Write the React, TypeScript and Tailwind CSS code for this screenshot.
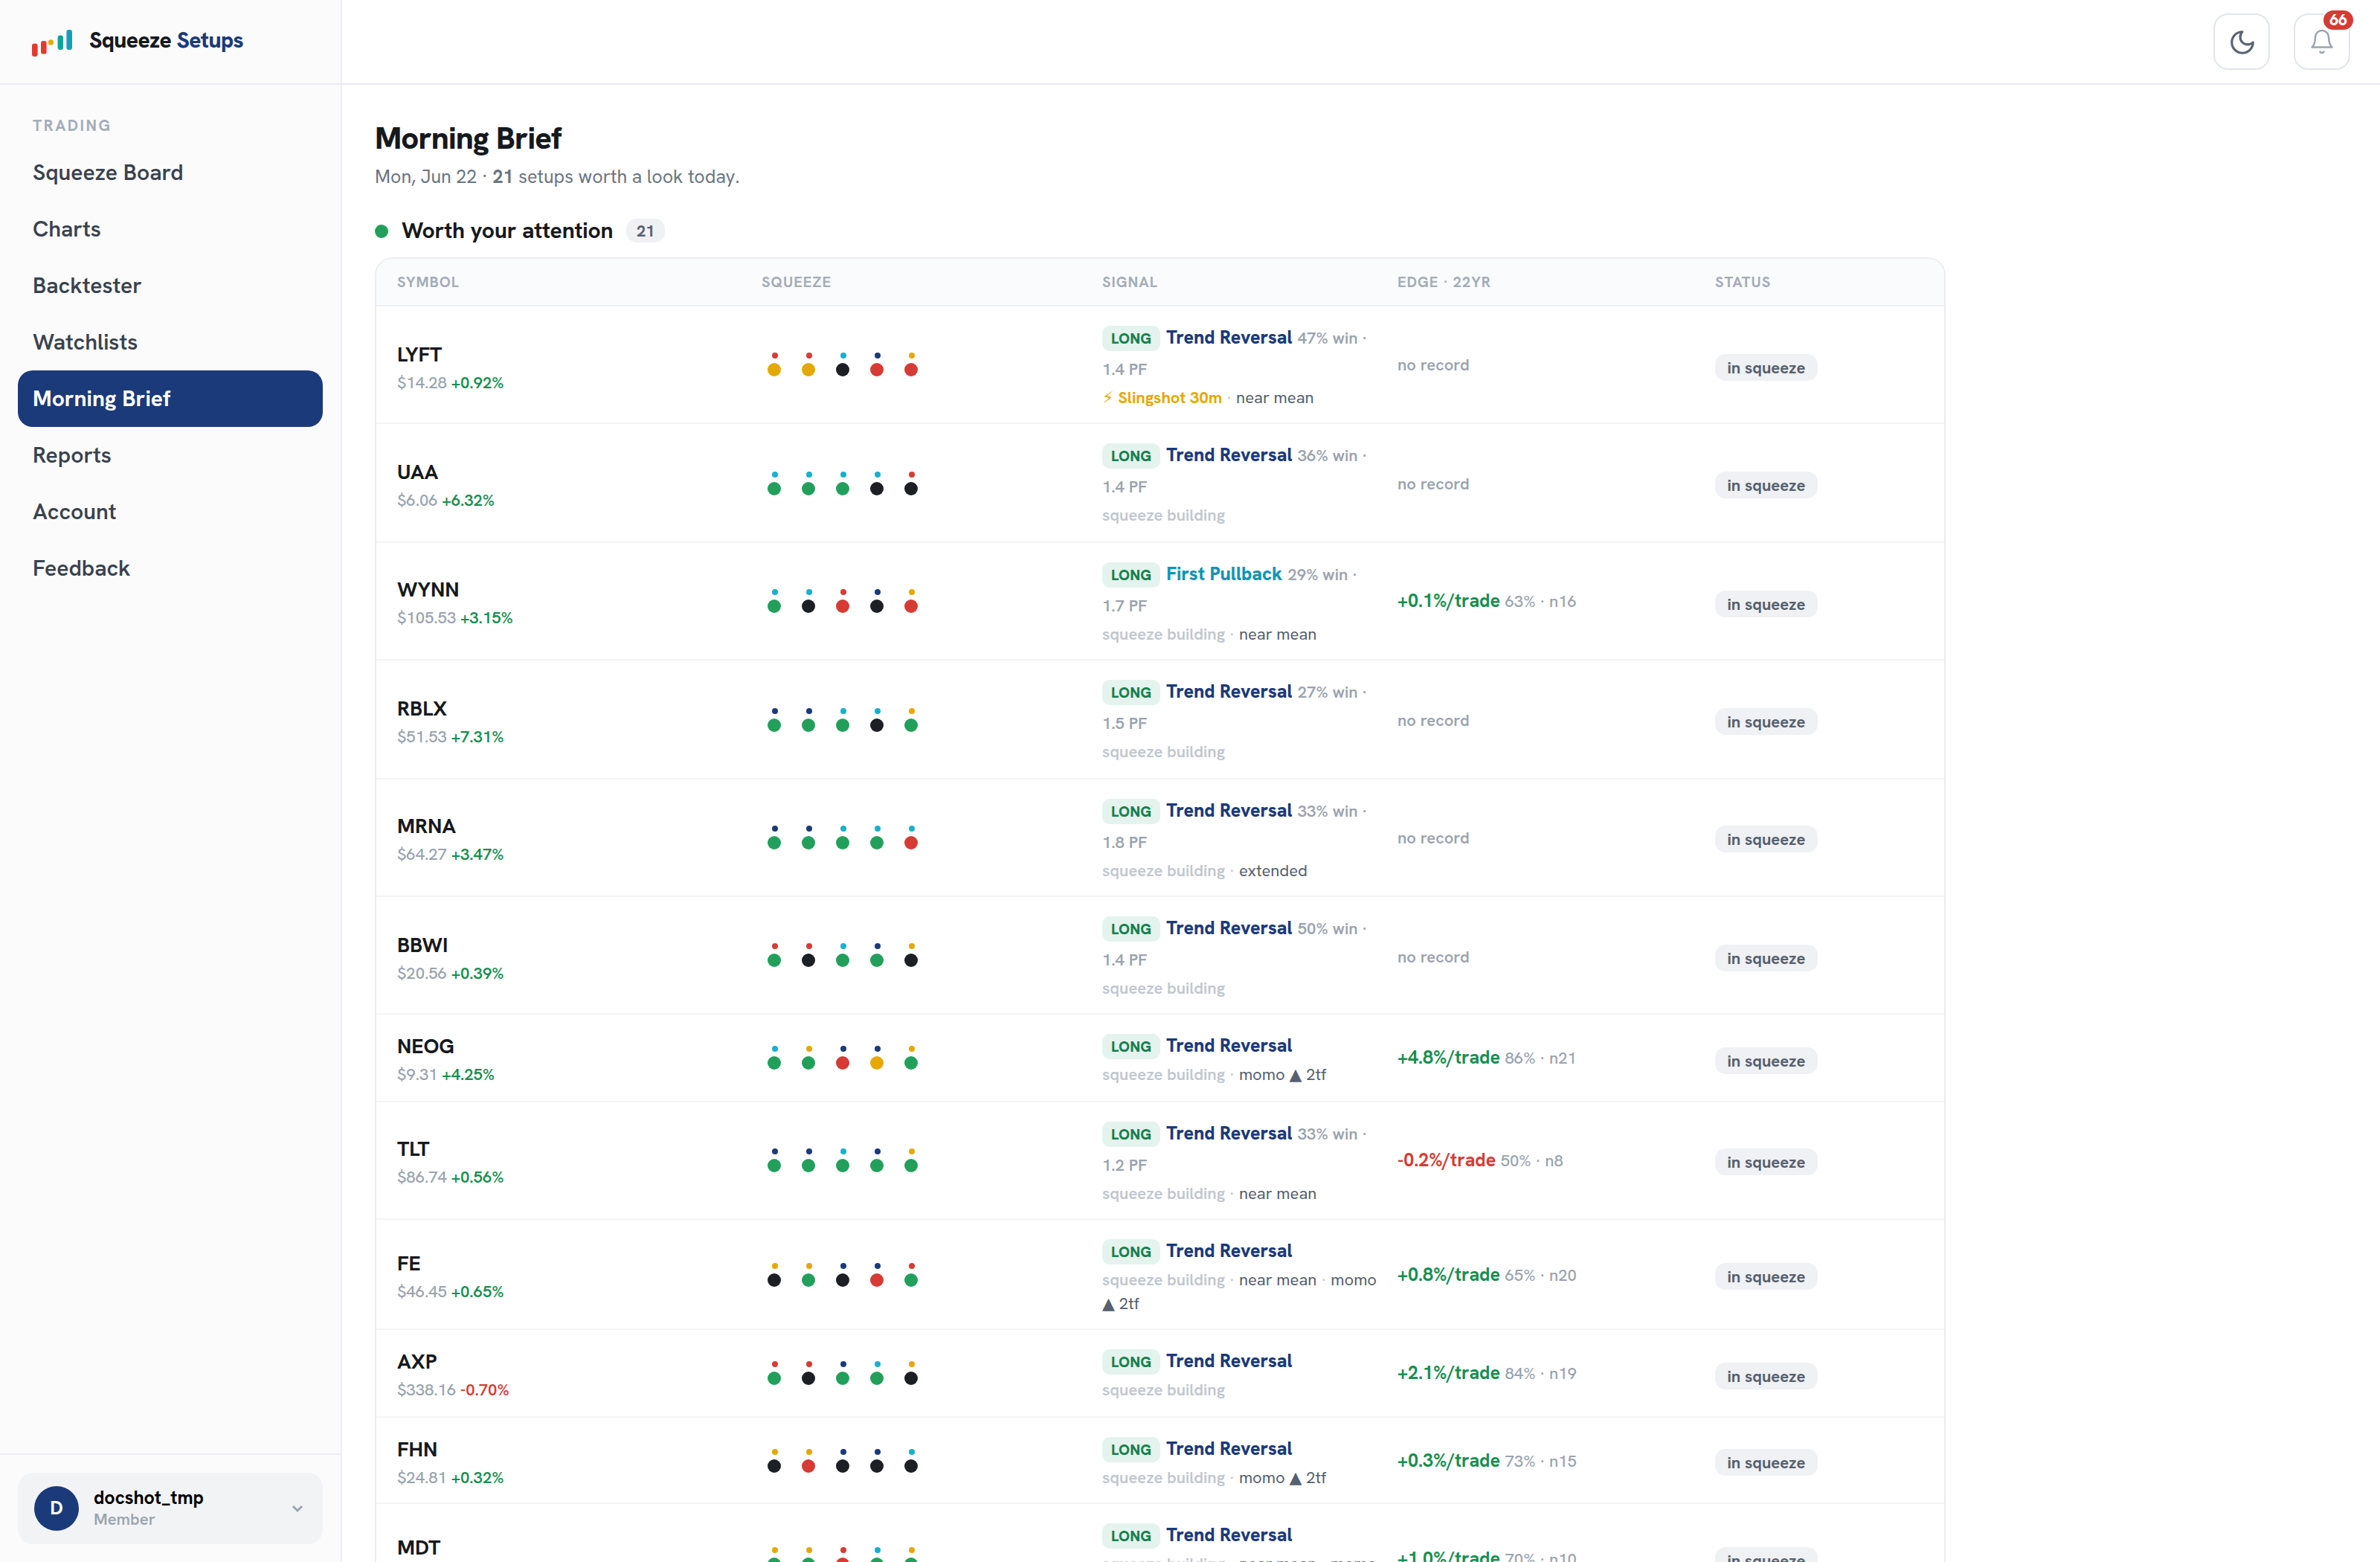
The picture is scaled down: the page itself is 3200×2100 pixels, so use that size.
import type { ReactNode } from 'react';

const NAV_ITEMS = ['Squeeze Board', 'Charts', 'Backtester', 'Watchlists', 'Morning Brief', 'Reports', 'Account', 'Feedback'];

const DOT: Record<string, string> = {
  r: 'bg-[#d63b34]',
  y: 'bg-[#e5a800]',
  g: 'bg-[#22a05b]',
  k: 'bg-[#1c1f24]',
  c: 'bg-[#18b0cf]',
  n: 'bg-[#1b3a7a]',
};

type Row = {
  symbol: string;
  price: string;
  change: string;
  momentum: string;
  squeeze: string;
  name: string;
  record?: string;
  slingshot?: boolean;
  notes?: string[];
  edge?: string;
  sample?: string;
};

const ROWS: Row[] = [
  { symbol: 'LYFT', price: '$14.28', change: '+0.92%', momentum: 'rrcny', squeeze: 'yykrr', name: 'Trend Reversal', record: '47% win · 1.4 PF', slingshot: true, notes: ['near mean'] },
  { symbol: 'UAA', price: '$6.06', change: '+6.32%', momentum: 'ccccr', squeeze: 'gggkk', name: 'Trend Reversal', record: '36% win · 1.4 PF' },
  { symbol: 'WYNN', price: '$105.53', change: '+3.15%', momentum: 'ccrny', squeeze: 'gkrkr', name: 'First Pullback', record: '29% win · 1.7 PF', notes: ['near mean'], edge: '+0.1%/trade', sample: '63% · n16' },
  { symbol: 'RBLX', price: '$51.53', change: '+7.31%', momentum: 'nnccy', squeeze: 'gggkg', name: 'Trend Reversal', record: '27% win · 1.5 PF' },
  { symbol: 'MRNA', price: '$64.27', change: '+3.47%', momentum: 'nnccc', squeeze: 'ggggr', name: 'Trend Reversal', record: '33% win · 1.8 PF', notes: ['extended'] },
  { symbol: 'BBWI', price: '$20.56', change: '+0.39%', momentum: 'rrcny', squeeze: 'gkggk', name: 'Trend Reversal', record: '50% win · 1.4 PF' },
  { symbol: 'NEOG', price: '$9.31', change: '+4.25%', momentum: 'cynny', squeeze: 'ggryg', name: 'Trend Reversal', notes: ['momo ▲ 2tf'], edge: '+4.8%/trade', sample: '86% · n21' },
  { symbol: 'TLT', price: '$86.74', change: '+0.56%', momentum: 'nncny', squeeze: 'ggggg', name: 'Trend Reversal', record: '33% win · 1.2 PF', notes: ['near mean'], edge: '-0.2%/trade', sample: '50% · n8' },
  { symbol: 'FE', price: '$46.45', change: '+0.65%', momentum: 'yynnr', squeeze: 'kgkrg', name: 'Trend Reversal', notes: ['near mean', 'momo ▲ 2tf'], edge: '+0.8%/trade', sample: '65% · n20' },
  { symbol: 'AXP', price: '$338.16', change: '-0.70%', momentum: 'rrncy', squeeze: 'gkggk', name: 'Trend Reversal', edge: '+2.1%/trade', sample: '84% · n19' },
  { symbol: 'FHN', price: '$24.81', change: '+0.32%', momentum: 'yynnc', squeeze: 'krkkk', name: 'Trend Reversal', notes: ['momo ▲ 2tf'], edge: '+0.3%/trade', sample: '73% · n15' },
  { symbol: 'MDT', price: '$84.12', change: '+0.41%', momentum: 'yyrcy', squeeze: 'ggrgg', name: 'Trend Reversal', notes: ['near mean', 'momo ▲ 2tf'], edge: '+1.0%/trade', sample: '70% · n10' },
];

const COLS = 'grid grid-cols-[233px_217px_186.5px_201.5px_1fr] gap-x-3 px-3.5';

const signColor = (value: string) => (value.startsWith('-') ? 'text-[#d93b34]' : 'text-[#178f50]');

function Logo() {
  return (
    <svg className="mt-0.5" width="28" height="20" viewBox="0 0 28 20">
      <rect x="0.5" y="10.2" width="3.8" height="8.8" rx="1.6" fill="#e5392f" />
      <rect x="6.5" y="8.5" width="3.8" height="8.8" rx="1.6" fill="#e5392f" />
      <circle cx="13.2" cy="9.5" r="1.85" fill="#e8ab00" />
      <rect x="17.8" y="4.8" width="3.7" height="9.7" rx="1.6" fill="#0fa39a" />
      <rect x="23.7" y="1" width="3.8" height="13.5" rx="1.6" fill="#179db9" />
    </svg>
  );
}

function Sidebar() {
  return (
    <aside className="flex w-[230px] shrink-0 flex-col border-r border-[#ececf1] bg-[#fbfbfc]">
      <div className="flex h-[57px] items-center border-b border-[#ececf1] pl-[21px]">
        <Logo />
        <span className="ml-[11px] pb-0.5 text-[15px] leading-5 font-extrabold tracking-[-0.02em] text-[#16191d]">
          Squeeze <span className="text-[#1b3a7a]">Setups</span>
        </span>
      </div>
      <div className="flex flex-1 flex-col px-3">
        <p className="pt-[18px] pl-2.5 text-[10.5px] leading-[18px] font-bold tracking-[0.12em] text-[#a3acb8]">TRADING</p>
        <nav className="mt-1 flex flex-col">
          {NAV_ITEMS.map((item) => (
            <a
              key={item}
              className={`flex h-[38px] items-center rounded-[10px] pl-2.5 text-[15px] ${
                item === 'Morning Brief' ? 'bg-[#1b3a7a] font-bold text-white' : 'font-semibold text-[#3a424d]'
              }`}
            >
              {item}
            </a>
          ))}
        </nav>
      </div>
      <div className="border-t border-[#ececf1] p-3">
        <div className="flex h-12 items-center rounded-[10px] bg-[#f2f3f5] px-[11px]">
          <span className="flex size-[30px] items-center justify-center rounded-full bg-[#1b3a7a] text-[13px] font-bold text-white">D</span>
          <div className="ml-2.5 flex-1 pb-0.5">
            <p className="text-[12.5px] leading-[15px] font-bold text-black">docshot_tmp</p>
            <p className="text-[11px] leading-[14px] font-semibold text-[#9aa5b1]">Member</p>
          </div>
          <svg width="12" height="12" viewBox="0 0 24 24" fill="none" stroke="#9aa5b1" strokeWidth="3">
            <path d="M6 9l6 6 6-6" />
          </svg>
        </div>
      </div>
    </aside>
  );
}

function IconButton({ children }: { children: ReactNode }) {
  return (
    <button className="relative flex size-[38px] items-center justify-center rounded-[10px] border border-[#e2e5ea] bg-white">
      {children}
    </button>
  );
}

function TopBar() {
  return (
    <header className="flex h-[57px] items-center justify-end gap-4 border-b border-[#ececf1] bg-white pr-5">
      <IconButton>
        <svg width="19" height="19" viewBox="0 0 24 24" fill="none" stroke="#5b6472" strokeWidth="2" strokeLinecap="round" strokeLinejoin="round">
          <path d="M12 3a6 6 0 0 0 9 9 9 9 0 1 1-9-9Z" />
        </svg>
      </IconButton>
      <IconButton>
        <svg width="18" height="18" viewBox="0 0 24 24" fill="none" stroke="#9aa5b1" strokeWidth="1.7" strokeLinecap="round" strokeLinejoin="round">
          <path d="M18 8A6 6 0 0 0 6 8c0 7-3 9-3 9h18s-3-2-3-9" />
          <path d="M13.73 21a2 2 0 0 1-3.46 0" />
        </svg>
        <span className="absolute -top-[3px] -right-[3px] flex h-[13px] w-5 items-center justify-center rounded-full bg-[#d63b34] pt-px text-[10.5px] font-extrabold text-white shadow-[0_0_0_1px_#fff]">
          66
        </span>
      </IconButton>
    </header>
  );
}

function Note({ text }: { text: string }) {
  const [before, after] = text.split('▲');
  if (after === undefined) return <>{text}</>;
  return (
    <>
      {before}
      <span className="font-['DejaVu_Sans'] leading-none">▲</span>
      {after}
    </>
  );
}

function SetupRow({ row }: { row: Row }) {
  return (
    <div className={`${COLS} items-center border-b border-[#f3f4f6] pt-[9.9px] pb-[8.6px]`}>
      <div className="-mb-[0.5px] pt-[0.5px] tabular-nums">
        <p className="text-[14px] leading-[21px] font-bold text-[#16191d]">{row.symbol}</p>
        <p className="text-[11px] leading-[16.5px] font-medium text-[#9aa3af]">
          {row.price} <span className={`font-semibold ${signColor(row.change)}`}>{row.change}</span>
        </p>
      </div>
      <div className="-mt-[0.9px] flex gap-1.5">
        {[...row.squeeze].map((dot, i) => (
          <span key={i} className="flex w-[17px] flex-col items-center gap-[3px]">
            <i className={`size-1 rounded-full ${DOT[row.momentum[i]]}`} />
            <i className={`size-[9px] rounded-full ${DOT[dot]}`} />
          </span>
        ))}
      </div>
      <div>
        <div className="text-[14px] leading-[1.507]">
          <span className="mr-1 inline-block rounded-[5px] bg-[#e4f3ed] px-1.5 py-0.5 text-[10px] leading-[13px] font-extrabold tracking-[0.01em] text-[#17804d]">
            LONG
          </span>
          <b className={`text-[12.5px] font-extrabold ${row.name === 'First Pullback' ? 'text-[#0e95b5]' : 'text-[#1b3a7a]'}`}>{row.name}</b>
          {row.record && (
            <>
              {' '}
              <span className="text-[11px] font-semibold text-[#9aa3af]">{row.record}</span>
            </>
          )}
        </div>
        <div className="mt-[1.8px] text-[11px] leading-[1.45] text-[#c0c6ce]">
          {row.slingshot ? (
            <b className="font-bold text-[#e5a800]">
              <span className="font-['DejaVu_Sans'] leading-none font-normal">⚡&#xFE0E;</span> Slingshot 30m
            </b>
          ) : (
            <span className="font-semibold">squeeze building</span>
          )}
          {row.notes?.map((note) => (
            <span key={note}>
              {' · '}
              <span className="text-[#56606e]">
                <Note text={note} />
              </span>
            </span>
          ))}
        </div>
      </div>
      <div className="text-[12.5px] leading-[1.5] tabular-nums">
        {row.edge ? (
          <>
            <b className={`font-bold ${signColor(row.edge)}`}>{row.edge}</b>{' '}
            <span className="text-[11px] font-medium text-[#9aa3af]">{row.sample}</span>
          </>
        ) : (
          <span className="text-[11px] font-semibold text-[#9aa3af]">no record</span>
        )}
      </div>
      <div className="flex pt-[1.7px]">
        <span className="rounded-[7px] bg-[#f0f1f4] px-[8.2px] py-0.5 text-[11px] leading-[14px] font-bold text-[#56606e]">in squeeze</span>
      </div>
    </div>
  );
}

export default function App() {
  return (
    <div className="h-[2100px] w-[3200px] overflow-hidden bg-white">
      <div className="flex h-[1050px] w-[1600px] origin-top-left scale-200 overflow-hidden bg-white font-['Hanken_Grotesk','Inter','DejaVu_Sans',sans-serif]">
        <Sidebar />
        <div className="flex-1">
          <TopBar />
          <main className="px-[22px] pt-[22px]">
            <h1 className="text-[21px] leading-[28px] font-extrabold tracking-[-0.02em] text-[#16191d]">Morning Brief</h1>
            <p className="mt-[3px] text-[12.5px] leading-[18px] text-[#6b7480]">
              Mon, Jun 22 · <b className="font-bold">21</b> setups worth a look today.
            </p>
            <div className="mt-[17px] flex h-5 items-center">
              <span className="size-[9px] rounded-full bg-[#22a05b]" />
              <h2 className="ml-[9px] text-[15px] leading-5 font-bold tracking-[-0.005em] text-[#16191d]">Worth your attention</h2>
              <span className="ml-[9px] flex h-4 w-[26px] items-center justify-center rounded-[7px] bg-[#f0f1f4] text-[11px] font-bold text-[#56606e]">
                21
              </span>
            </div>
            <section className="mt-2 w-[1056px] overflow-hidden rounded-xl border border-[#ececf1] bg-white">
              <div className={`${COLS} h-8 items-center border-b border-[#f0f1f4] bg-[#fafbfd] text-[10px] font-bold tracking-[0.05em] text-[#a3acb8]`}>
                <span>SYMBOL</span>
                <span>SQUEEZE</span>
                <span>SIGNAL</span>
                <span>EDGE · 22YR</span>
                <span>STATUS</span>
              </div>
              {ROWS.map((row) => (
                <SetupRow key={row.symbol} row={row} />
              ))}
            </section>
          </main>
        </div>
      </div>
    </div>
  );
}
